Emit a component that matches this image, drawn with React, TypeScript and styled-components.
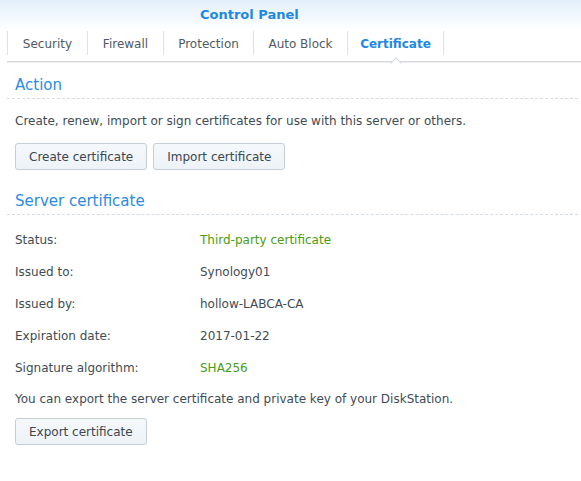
import React from 'react'
import styled, { createGlobalStyle } from 'styled-components'

const GlobalStyle = createGlobalStyle`
  html, body {
    margin: 0;
    padding: 0;
    background: #ffffff;
  }
  body {
    font-family: "DejaVu Sans", Verdana, sans-serif;
    font-size: 12px;
    color: #414b55;
  }
  * {
    box-sizing: border-box;
  }
`

const Window = styled.div`
  width: 581px;
  height: 481px;
  background: #fff;
  overflow: hidden;
`

const Header = styled.div`
  height: 30px;
  background: linear-gradient(#e3effb, #ffffff);
  display: flex;
  align-items: flex-start;
  padding-left: 200px;
`

const Title = styled.div`
  font-weight: bold;
  font-size: 13px;
  color: #1e88e5;
  padding-top: 7px;
`

const TabBar = styled.div`
  margin-left: 7px;
  height: 32px;
  display: flex;
  border-bottom: 1px solid #d3d8de;
  box-shadow: 0 1px 1px rgba(0, 0, 0, 0.06);
  position: relative;
`

const Tab = styled.div<{ $active?: boolean; $w: number }>`
  width: ${p => p.$w}px;
  height: 24px;
  margin-top: 1px;
  padding-top: 2px;
  border-left: 1px solid #dde3e9;
  display: flex;
  align-items: center;
  justify-content: center;
  color: ${p => (p.$active ? '#1e88e5' : '#505a64')};
  font-weight: ${p => (p.$active ? 'bold' : 'normal')};
  position: relative;
  &:last-child {
    border-right: 1px solid #dde3e9;
    width: ${p => p.$w + 1}px;
  }
`

const Notch = styled.span`
  position: absolute;
  left: 50%;
  bottom: -8px;
  width: 8px;
  height: 8px;
  margin-left: -4px;
  background: #fff;
  border-left: 1px solid #d3d8de;
  border-top: 1px solid #d3d8de;
  transform: translateY(50%) rotate(45deg);
`

const Content = styled.div`
  padding: 0 3px 0 7px;
`

const Section = styled.div<{ $gap: number }>`
  margin-top: ${p => p.$gap}px;
`

const SectionTitle = styled.div`
  font-size: 15px;
  color: #2a8ae8;
  padding: 1px 0 3px 8px;
  border-bottom: 1px dashed #d5dde5;
  line-height: 20px;
`

const Body = styled.div`
  padding-left: 8px;
`

const Text = styled.div<{ $gap: number }>`
  margin-top: ${p => p.$gap}px;
  line-height: 16px;
`

const Buttons = styled.div<{ $gap: number }>`
  display: flex;
  gap: 6px;
  margin-top: ${p => p.$gap}px;
`

const Button = styled.button`
  font-family: inherit;
  font-size: 12px;
  color: #3c4650;
  height: 27px;
  padding: 0 13px;
  background: linear-gradient(#f5f8fb, #eef3f8);
  border: 1px solid #c5ced7;
  border-radius: 3px;
`

const Rows = styled.div`
  margin-top: 9px;
`

const Row = styled.div`
  display: flex;
  height: 32px;
  align-items: center;
`

const Label = styled.div`
  width: 185px;
`

const Value = styled.div<{ $green?: boolean }>`
  color: ${p => (p.$green ? '#4a9c12' : '#414b55')};
`

const tabs = [
  { label: 'Security', w: 80 },
  { label: 'Firewall', w: 76 },
  { label: 'Protection', w: 90 },
  { label: 'Auto Block', w: 94 },
  { label: 'Certificate', w: 96, active: true },
]

const rows = [
  { label: 'Status:', value: 'Third-party certificate', green: true },
  { label: 'Issued to:', value: 'Synology01' },
  { label: 'Issued by:', value: 'hollow-LABCA-CA' },
  { label: 'Expiration date:', value: '2017-01-22' },
  { label: 'Signature algorithm:', value: 'SHA256', green: true },
]

export default function App() {
  return (
    <Window>
      <GlobalStyle />
      <Header>
        <Title>Control Panel</Title>
      </Header>
      <TabBar>
        {tabs.map(t => (
          <Tab key={t.label} $w={t.w} $active={t.active}>
            {t.label}
            {t.active && <Notch />}
          </Tab>
        ))}
      </TabBar>
      <Content>
        <Section $gap={12}>
          <SectionTitle>Action</SectionTitle>
          <Body>
            <Text $gap={14}>Create, renew, import or sign certificates for use with this server or others.</Text>
            <Buttons $gap={14}>
              <Button>Create certificate</Button>
              <Button>Import certificate</Button>
            </Buttons>
          </Body>
        </Section>
        <Section $gap={20}>
          <SectionTitle>Server certificate</SectionTitle>
          <Body>
            <Rows>
              {rows.map(r => (
                <Row key={r.label}>
                  <Label>{r.label}</Label>
                  <Value $green={r.green}>{r.value}</Value>
                </Row>
              ))}
            </Rows>
            <Text $gap={7}>You can export the server certificate and private key of your DiskStation.</Text>
            <Buttons $gap={11}>
              <Button>Export certificate</Button>
            </Buttons>
          </Body>
        </Section>
      </Content>
    </Window>
  )
}
